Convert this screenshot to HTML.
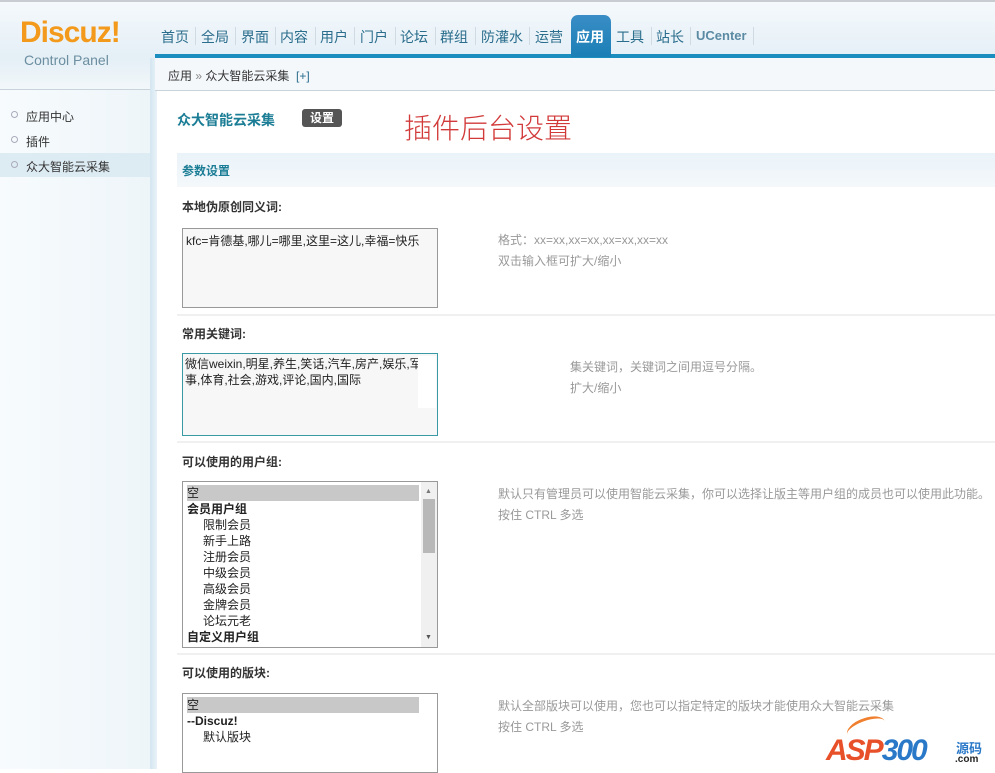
<!DOCTYPE html>
<html><head><meta charset="utf-8"><style>
*{margin:0;padding:0;box-sizing:border-box}
body{width:995px;height:769px;overflow:hidden;background:#fff;font-family:"Liberation Sans","Noto Sans CJK SC",sans-serif;font-size:12px;color:#333;position:relative}
.a{position:absolute;white-space:nowrap}
#hd{left:0;top:0;width:995px;height:58px;background:linear-gradient(#f5f9fc,#e4eff6);border-top:2px solid #c9ccd0}
#hdl{left:0;top:58px;width:155px;height:31px;background:linear-gradient(#e4eff6,#f2f7fa)}
#bar{left:155px;top:54px;width:840px;height:4px;background:#1a8fbf}
#crumb{left:155px;top:58px;width:840px;height:33px;background:#f4f8fb;border-bottom:1px solid #c8d3db}
#side{left:0;top:90px;width:150px;height:679px;background:linear-gradient(90deg,#f7fbfd,#eef5f9)}
#sidetop{left:0;top:89px;width:157px;height:1px;background:#c8d3db}
#vb{left:150px;top:58px;width:7px;height:711px;background:linear-gradient(90deg,#d4e6f1,#e9f2f8)}
.nav{top:27px;font-size:14px;color:#2a6d8c}
.sep{top:27px;width:1px;height:18px;background:#d0dae2}
.si{left:26px;font-size:12px;color:#333}
.dot{left:11px;width:7px;height:7px;border:1px solid #aab;border-radius:50%}
.lbl{left:182px;font-weight:bold;font-size:12px;color:#333}
.tip{left:498px;color:#999;font-size:12px}
.hr{left:177px;width:818px;height:2px;background:#f0f0f0}
.box{left:182px;width:256px;border:1px solid #999;background:#f7f7f7;font-size:12px;color:#222;padding:3px}
.opt{line-height:16px;height:16px}
</style></head><body>
<div class="a" id="hd"></div>
<div class="a" id="hdl"></div>
<div class="a" id="side"></div>
<div class="a" id="sidetop"></div>
<div class="a" id="vb"></div>
<div class="a" style="left:20px;top:16px;font-size:30px;font-weight:bold;color:#f39a1c;letter-spacing:-1px">Discuz!</div>
<div class="a" style="left:24px;top:52px;font-size:14px;color:#6b8ea0">Control Panel</div>
<div class="a" id="bar"></div>
<div class="a" style="left:571px;top:15px;width:40px;height:42px;background:linear-gradient(#3a8dc6,#1a7fb5);border-radius:7px 7px 0 0"></div>
<div class="a nav" style="left:161px">首页</div><div class="a sep" style="left:195px"></div>
<div class="a nav" style="left:201px">全局</div><div class="a sep" style="left:235px"></div>
<div class="a nav" style="left:241px">界面</div><div class="a sep" style="left:275px"></div>
<div class="a nav" style="left:280px">内容</div><div class="a sep" style="left:315px"></div>
<div class="a nav" style="left:320px">用户</div><div class="a sep" style="left:354px"></div>
<div class="a nav" style="left:360px">门户</div><div class="a sep" style="left:395px"></div>
<div class="a nav" style="left:400px">论坛</div><div class="a sep" style="left:435px"></div>
<div class="a nav" style="left:440px">群组</div><div class="a sep" style="left:475px"></div>
<div class="a nav" style="left:481px">防灌水</div><div class="a sep" style="left:529px"></div>
<div class="a nav" style="left:535px">运营</div>
<div class="a nav" style="left:576px;color:#fff;font-weight:bold">应用</div>
<div class="a nav" style="left:616px">工具</div><div class="a sep" style="left:651px"></div>
<div class="a nav" style="left:656px">站长</div><div class="a sep" style="left:690px"></div>
<div class="a nav" style="left:696px;font-size:13px;top:28px;color:#5b8aa3;font-weight:bold">UCenter</div><div class="a sep" style="left:753px"></div>
<div class="a" id="crumb"></div>
<div class="a" style="left:168px;top:67px;color:#333">应用 <span style="color:#888">»</span> 众大智能云采集 <span style="color:#2a6d8c">&nbsp;[+]</span></div>
<div class="a" style="left:0;top:153px;width:150px;height:24px;background:#ddebf3"></div>
<div class="a dot" style="top:111px"></div><div class="a si" style="top:108px">应用中心</div>
<div class="a dot" style="top:136px"></div><div class="a si" style="top:133px">插件</div>
<div class="a dot" style="top:161px"></div><div class="a si" style="top:158px">众大智能云采集</div>
<div class="a" style="left:177px;top:110px;font-size:14px;font-weight:bold;color:#1b7d95">众大智能云采集</div>
<div class="a" style="left:302px;top:109px;width:40px;height:18px;background:#555;border-radius:3px;color:#fff;font-weight:bold;text-align:center;line-height:18px">设置</div>
<div class="a" style="left:404px;top:107px;font-size:28px;color:#d23a3a;font-family:'Noto Sans CJK SC',sans-serif;font-weight:300">插件后台设置</div>
<div class="a" style="left:177px;top:153px;width:818px;height:34px;background:linear-gradient(#eaf3f9,#f4f8fb)"></div>
<div class="a" style="left:182px;top:162px;font-weight:bold;color:#1b7d95">参数设置</div>
<div class="a lbl" style="top:198px">本地伪原创同义词:</div>
<div class="a box" style="top:228px;height:80px">kfc=肯德基,哪儿=哪里,这里=这儿,幸福=快乐</div>
<div class="a tip" style="top:231px">格式：xx=xx,xx=xx,xx=xx,xx=xx</div>
<div class="a tip" style="top:252px">双击输入框可扩大/缩小</div>
<div class="a hr" style="top:314px"></div>
<div class="a lbl" style="top:325px">常用关键词:</div>
<div class="a box" style="top:353px;height:83px;border-color:#3a9aa4;white-space:normal;line-height:16px;padding:2px">微信weixin,明星,养生,笑话,汽车,房产,娱乐,军事,体育,社会,游戏,评论,国内,国际</div>
<div class="a" style="left:418px;top:356px;width:18px;height:52px;background:#fff"></div>
<div class="a tip" style="top:358px;left:570px">集关键词，关键词之间用逗号分隔。</div>
<div class="a tip" style="top:379px;left:570px">扩大/缩小</div>
<div class="a hr" style="top:441px"></div>
<div class="a lbl" style="top:453px">可以使用的用户组:</div>
<div class="a box" style="top:481px;height:167px;background:#fff;padding:3px 0 0 4px">
<div class="opt" style="background:#c8c8c8;width:232px">空</div>
<div class="opt" style="font-weight:bold">会员用户组</div>
<div class="opt" style="padding-left:16px">限制会员</div>
<div class="opt" style="padding-left:16px">新手上路</div>
<div class="opt" style="padding-left:16px">注册会员</div>
<div class="opt" style="padding-left:16px">中级会员</div>
<div class="opt" style="padding-left:16px">高级会员</div>
<div class="opt" style="padding-left:16px">金牌会员</div>
<div class="opt" style="padding-left:16px">论坛元老</div>
<div class="opt" style="font-weight:bold">自定义用户组</div>
</div>
<div class="a" style="left:421px;top:482px;width:16px;height:165px;background:#f0f0f0"></div>
<div class="a" style="left:423px;top:499px;width:12px;height:54px;background:#b8b8b8"></div>
<div class="a" style="left:425px;top:488px;font-size:7px;color:#777">▲</div>
<div class="a" style="left:425px;top:634px;font-size:7px;color:#555">▼</div>
<div class="a tip" style="top:485px">默认只有管理员可以使用智能云采集，你可以选择让版主等用户组的成员也可以使用此功能。</div>
<div class="a tip" style="top:506px">按住 CTRL 多选</div>
<div class="a hr" style="top:653px"></div>
<div class="a lbl" style="top:664px">可以使用的版块:</div>
<div class="a box" style="top:693px;height:80px;background:#fff;padding:3px 0 0 4px">
<div class="opt" style="background:#c8c8c8;width:232px">空</div>
<div class="opt" style="font-weight:bold">--Discuz!</div>
<div class="opt" style="padding-left:16px">默认版块</div>
</div>
<div class="a tip" style="top:697px">默认全部版块可以使用，您也可以指定特定的版块才能使用众大智能云采集</div>
<div class="a tip" style="top:718px">按住 CTRL 多选</div>
<div class="a" style="left:826px;top:734px;font-size:30px;font-weight:bold;font-style:italic;color:#e8502a;letter-spacing:-2px">ASP<span style="color:#2a78c8">300</span></div>
<div class="a" style="left:956px;top:738px;font-size:13px;font-weight:bold;color:#2a78c8">源码</div>
<div class="a" style="left:955px;top:754px;font-size:10px;font-weight:bold;color:#222">.com</div>
<div class="a" style="left:846px;top:718px;width:40px;height:20px;border-top:3px solid #f08030;border-radius:50% 50% 0 0;transform:rotate(-20deg)"></div>
</body></html>
